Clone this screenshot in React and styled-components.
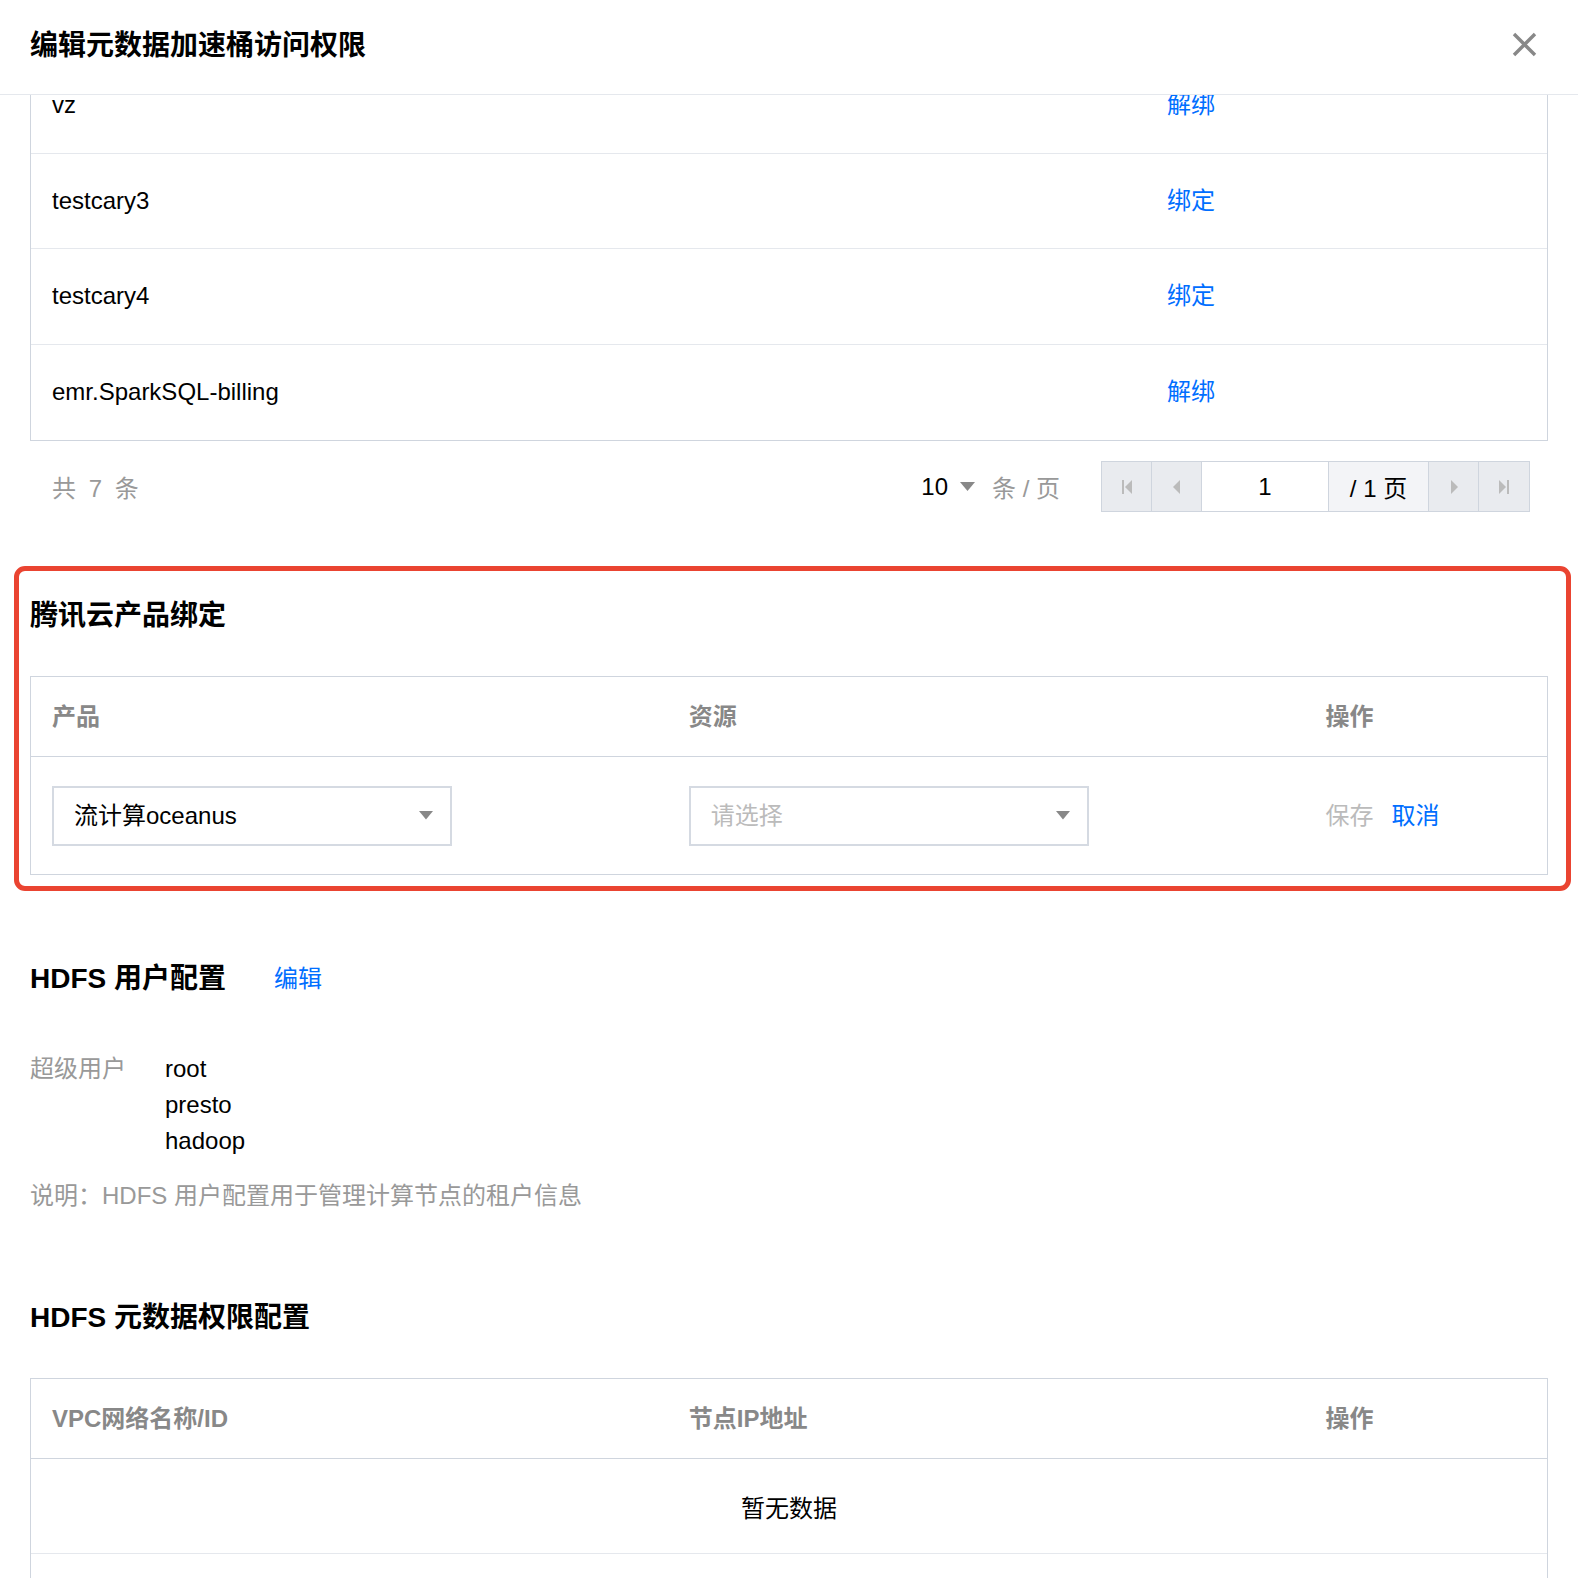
import React from 'react';
import styled, { createGlobalStyle } from 'styled-components';

const GlobalStyle = createGlobalStyle`
  html, body { margin: 0; padding: 0; background: #fff; }
  body {
    font-family: "Liberation Sans", "Noto Sans CJK SC", sans-serif;
    color: #000;
    overflow: hidden;
  }
  * { box-sizing: border-box; }
`;

const Dialog = styled.div`
  width: 1578px;
  height: 1578px;
  display: flex;
  flex-direction: column;
  background: #fff;
  overflow: hidden;
`;

const Header = styled.header`
  flex: 0 0 95px;
  display: flex;
  align-items: center;
  justify-content: space-between;
  padding: 0 41px 2px 30px;
  border-bottom: 1px solid #e5e8ed;
  background: #fff;
`;

const DialogTitle = styled.h2`
  margin: 0;
  font-size: 28px;
  font-weight: 700;
  line-height: 40px;
  color: #000;
`;

const CloseButton = styled.button`
  border: 0;
  background: none;
  padding: 0;
  width: 26px;
  height: 26px;
  margin-bottom: 4px;
  display: flex;
  align-items: center;
  justify-content: center;
  cursor: pointer;
`;

const Body = styled.div`
  flex: 1;
  overflow: hidden;
`;

const Content = styled.div`
  padding: 0 30px;
  margin-top: -38px;
`;

const Table = styled.div`
  border: 1px solid #cfd5de;
  background: #fff;
`;

const Row = styled.div`
  display: grid;
  grid-template-columns: ${(p) => p.$cols};
  align-items: center;
  height: ${(p) => p.$h}px;
  border-bottom: ${(p) => (p.$last ? '0' : '1px solid ' + (p.$head ? '#cfd5de' : '#e5e8ed'))};
`;

const Cell = styled.div`
  padding: 0 21px;
  font-size: 24px;
  line-height: 32px;
  white-space: nowrap;
  color: ${(p) => (p.$head ? '#888' : '#000')};
  font-weight: ${(p) => (p.$head ? 700 : 400)};
  display: flex;
  align-items: center;
  gap: 18px;
`;

const EmptyCell = styled.div`
  grid-column: 1 / -1;
  text-align: center;
  font-size: 24px;
  color: #000;
`;

const Link = styled.a`
  color: ${(p) => (p.$disabled ? '#bbb' : '#006eff')};
  text-decoration: none;
  cursor: ${(p) => (p.$disabled ? 'not-allowed' : 'pointer')};
  font-size: 24px;
  font-weight: 400;
`;

const Pagination = styled.div`
  display: flex;
  align-items: center;
  padding: 20px 18px 0 22px;
  font-size: 24px;
`;

const Total = styled.div`
  color: #999;
  word-spacing: 6px;
  flex: 1;
`;

const PageSize = styled.div`
  display: flex;
  align-items: center;
  gap: 12px;
  margin-right: 41px;
`;

const PageSizeValue = styled.span`
  color: #000;
`;

const Muted = styled.span`
  color: #999;
  margin-left: 5px;
`;

const Pager = styled.div`
  display: flex;
  height: 51px;
  border: 1px solid #cfd5de;
`;

const PagerButton = styled.button`
  width: 50px;
  border: 0;
  border-right: ${(p) => (p.$last ? '0' : '1px solid #cfd5de')};
  background: #e9ebef;
  display: flex;
  align-items: center;
  justify-content: center;
  padding: 0;
`;

const PagerInput = styled.div`
  width: 127px;
  background: #fff;
  border-right: 1px solid #cfd5de;
  display: flex;
  align-items: center;
  justify-content: center;
  font-size: 24px;
`;

const PagerTotal = styled.div`
  width: 100px;
  background: #f3f4f7;
  border-right: 1px solid #cfd5de;
  display: flex;
  align-items: center;
  justify-content: center;
  font-size: 24px;
`;

const Highlight = styled.section`
  margin: 54px -23px 0 -16px;
  padding: 25px 18px 11px 11px;
  border: 5px solid #ea4431;
  border-radius: 11px;
`;

const SectionTitle = styled.h3`
  margin: 0 0 ${(p) => (p.$flush ? 0 : 40)}px;
  font-size: 28px;
  line-height: 40px;
  font-weight: 700;
  color: #000;
  display: flex;
  align-items: center;
  gap: 48px;
`;

const Select = styled.div`
  width: 400px;
  height: 60px;
  border: 2px solid #d5dae2;
  display: flex;
  align-items: center;
  justify-content: space-between;
  padding: 0 17px 0 20px;
  font-size: 24px;
  color: ${(p) => (p.$placeholder ? '#bbb' : '#000')};
  background: #fff;
`;

const Section = styled.section`
  margin-top: ${(p) => p.$top}px;
`;

const InfoRow = styled.div`
  display: grid;
  grid-template-columns: 135px 1fr;
  font-size: 24px;
  line-height: 36px;
  margin-top: 52px;
`;

const InfoLabel = styled.div`
  color: #999;
`;

const InfoValues = styled.div`
  color: #000;
  display: flex;
  flex-direction: column;
`;

const Note = styled.p`
  margin: 19px 0 0;
  font-size: 24px;
  line-height: 36px;
  color: #999;
`;

const Caret = ({ size = 14 }) => (
  <svg width={size} height={size * 0.6} viewBox="0 0 10 6">
    <path d="M0 0h10L5 6z" fill="#888" />
  </svg>
);

const PagerIcon = ({ dir, bar }) => (
  <svg width="14" height="16" viewBox="0 0 14 16">
    {dir === 'left' ? (
      <>
        {bar && <rect x="2" y="1" width="2" height="14" fill="#bbb" />}
        <path d={bar ? 'M12 1v14L5 8z' : 'M10 1v14L3 8z'} fill="#bbb" />
      </>
    ) : (
      <>
        <path d={bar ? 'M2 1v14l7-7z' : 'M4 1v14l7-7z'} fill="#bbb" />
        {bar && <rect x="10" y="1" width="2" height="14" fill="#bbb" />}
      </>
    )}
  </svg>
);

const CloseIcon = () => (
  <svg width="25" height="25" viewBox="0 0 25 25">
    <path d="M2 2L23 23M23 2L2 23" stroke="#888" strokeWidth="3.4" />
  </svg>
);

const topRows = [
  { name: 'vz', action: '解绑' },
  { name: 'testcary3', action: '绑定' },
  { name: 'testcary4', action: '绑定' },
  { name: 'emr.SparkSQL-billing', action: '解绑' },
];

const COLS3 = '42% 42% 16%';

export default function App() {
  return (
    <>
      <GlobalStyle />
      <Dialog>
        <Header>
          <DialogTitle>编辑元数据加速桶访问权限</DialogTitle>
          <CloseButton aria-label="关闭">
            <CloseIcon />
          </CloseButton>
        </Header>
        <Body>
          <Content>
            <Table>
              {topRows.map((r, i) => (
                <Row key={r.name} $cols="1115px 1fr" $h={95.5} $last={i === topRows.length - 1}>
                  <Cell>{r.name}</Cell>
                  <Cell>
                    <Link>{r.action}</Link>
                  </Cell>
                </Row>
              ))}
            </Table>

            <Pagination>
              <Total>共 7 条</Total>
              <PageSize>
                <PageSizeValue>10</PageSizeValue>
                <Caret size={15} />
                <Muted>条 / 页</Muted>
              </PageSize>
              <Pager>
                <PagerButton><PagerIcon dir="left" bar /></PagerButton>
                <PagerButton><PagerIcon dir="left" /></PagerButton>
                <PagerInput>1</PagerInput>
                <PagerTotal>/ 1 页</PagerTotal>
                <PagerButton><PagerIcon dir="right" /></PagerButton>
                <PagerButton $last><PagerIcon dir="right" bar /></PagerButton>
              </Pager>
            </Pagination>

            <Highlight>
              <SectionTitle>腾讯云产品绑定</SectionTitle>
              <Table>
                <Row $cols={COLS3} $h={80} $head>
                  <Cell $head>产品</Cell>
                  <Cell $head>资源</Cell>
                  <Cell $head>操作</Cell>
                </Row>
                <Row $cols={COLS3} $h={117} $last>
                  <Cell>
                    <Select>
                      <span>流计算oceanus</span>
                      <Caret />
                    </Select>
                  </Cell>
                  <Cell>
                    <Select $placeholder>
                      <span>请选择</span>
                      <Caret />
                    </Select>
                  </Cell>
                  <Cell>
                    <Link $disabled>保存</Link>
                    <Link>取消</Link>
                  </Cell>
                </Row>
              </Table>
            </Highlight>

            <Section $top={68}>
              <SectionTitle $flush>
                HDFS 用户配置
                <Link>编辑</Link>
              </SectionTitle>
              <InfoRow>
                <InfoLabel>超级用户</InfoLabel>
                <InfoValues>
                  <span>root</span>
                  <span>presto</span>
                  <span>hadoop</span>
                </InfoValues>
              </InfoRow>
              <Note>说明：HDFS 用户配置用于管理计算节点的租户信息</Note>
            </Section>

            <Section $top={84}>
              <SectionTitle>HDFS 元数据权限配置</SectionTitle>
              <Table>
                <Row $cols={COLS3} $h={80} $head>
                  <Cell $head>VPC网络名称/ID</Cell>
                  <Cell $head>节点IP地址</Cell>
                  <Cell $head>操作</Cell>
                </Row>
                <Row $cols="1fr" $h={95}>
                  <EmptyCell>暂无数据</EmptyCell>
                </Row>
                <Row $cols="1fr" $h={95} $last />
              </Table>
            </Section>
          </Content>
        </Body>
      </Dialog>
    </>
  );
}
